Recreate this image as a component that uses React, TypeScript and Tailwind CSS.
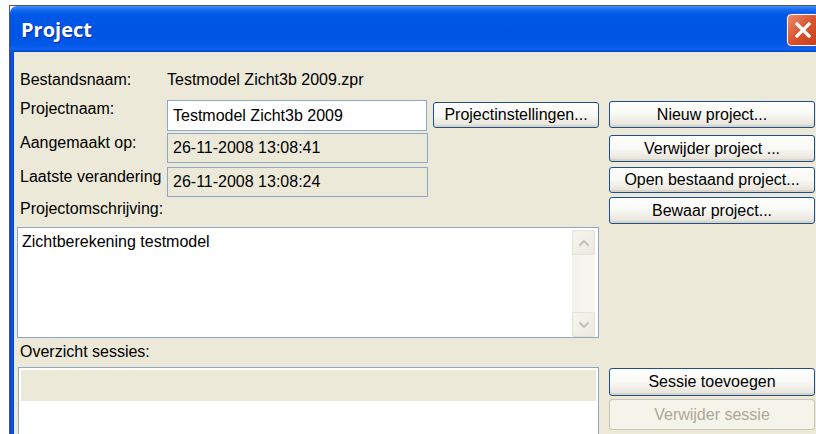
import React from "react";

type BtnProps = { label: string; className?: string; disabled?: boolean };

function XpButton({ label, className = "", disabled = false }: BtnProps) {
  const look = disabled
    ? "border-[#c9c7ba] bg-[#f5f4ea] text-[#aca899]"
    : "border-[#1f4f8a] bg-linear-to-b from-white via-[#f8f8f4] to-[#e4e1d6] text-black shadow-[inset_0_-2px_0_#d9d4c7]";
  return (
    <div
      className={`flex items-center justify-center rounded-[3px] border text-[16px] leading-[20px] whitespace-nowrap ${look} ${className}`}
    >
      {label}
    </div>
  );
}

function Chevron({ up }: { up: boolean }) {
  return (
    <svg width="12" height="8" viewBox="0 0 12 8">
      <path
        d={up ? "M1.5 6.5 L6 2 L10.5 6.5" : "M1.5 1.5 L6 6 L10.5 1.5"}
        fill="none"
        stroke="#c6c3b6"
        strokeWidth="2.2"
      />
    </svg>
  );
}

function ScrollArrow({ up }: { up: boolean }) {
  return (
    <div className="h-[25px] flex items-center justify-center rounded-[2px] border border-[#e4e2d8] bg-linear-to-br from-[#f6f5ef] to-[#ebe9e0]">
      <Chevron up={up} />
    </div>
  );
}

function CloseButton() {
  return (
    <div className="w-[32px] h-[32px] mt-[8px] mr-[10px] shrink-0 rounded-[4px] border border-white bg-linear-to-br from-[#ea8a6a] via-[#d9522d] to-[#c43e1a] flex items-center justify-center shadow-[0_0_0_1px_#2f58c4]">
      <svg width="18" height="18" viewBox="0 0 18 18">
        <path
          d="M3 3 L15 15 M15 3 L3 15"
          stroke="#ffffff"
          strokeWidth="3.2"
          strokeLinecap="square"
        />
      </svg>
    </div>
  );
}

const field = "border border-[#8fa9c4] flex items-center pl-[5px] whitespace-nowrap";

export default function App() {
  return (
    <div className="w-[816px] h-[434px] bg-white overflow-hidden font-['Liberation_Sans',Arial,sans-serif] text-[16px] leading-[20px] text-black">
      <div className="ml-[9px] mt-[5px] w-[820px] h-[429px] border-l border-t border-[#555555]">
        <div className="flex flex-col h-full rounded-tl-[7px] overflow-hidden">
          {/* title bar */}
          <div className="h-[46px] shrink-0 flex justify-between items-start bg-[linear-gradient(180deg,#3d8ff7_0%,#1467ee_9%,#0058e6_20%,#0054e3_62%,#0559e9_86%,#0b64f1_94%,#0045c8_100%)]">
            <div className="pl-[11px] pt-[14px] font-['Open_Sans','Liberation_Sans',sans-serif] font-bold text-[20px] leading-[20px] text-white [text-shadow:1px_1px_0_#0a2a9a]">
              Project
            </div>
            <CloseButton />
          </div>

          <div className="flex flex-1">
            {/* left window frame */}
            <div className="w-[4px] shrink-0 bg-[linear-gradient(90deg,#0a3cc9,#0a5ae8_50%,#0845d2)]" />

            {/* dialog body */}
            <div className="flex-1 bg-[#ece9d8] pl-[3px]">
              <div className="grid grid-cols-[150px_261px_5px_166px_10px_206px] grid-rows-[48px_33px_34px_30px_30px_111px_29px_67px]">
                {/* row 1 */}
                <div className="pl-[3px] mt-[18px]">Bestandsnaam:</div>
                <div className="col-span-3 mt-[18px]">Testmodel Zicht3b 2009.zpr</div>
                <div />
                <div />

                {/* row 2 */}
                <div className="pl-[3px] mt-[-1px]">Projectnaam:</div>
                <div className={`${field} h-[31px] bg-white mr-[1px]`}>Testmodel Zicht3b 2009</div>
                <div />
                <XpButton label="Projectinstellingen..." className="h-[26px] mt-[2px]" />
                <div />
                <XpButton label="Nieuw project..." className="h-[27px] mt-[1px]" />

                {/* row 3 */}
                <div className="pl-[3px] whitespace-nowrap">Aangemaakt op:</div>
                <div className={`${field} h-[30px]`}>26-11-2008 13:08:41</div>
                <div />
                <div />
                <div />
                <XpButton label="Verwijder project ..." className="h-[27px] mt-[2px]" />

                {/* row 4 */}
                <div className="pl-[3px] whitespace-nowrap">Laatste verandering</div>
                <div className={`${field} h-[30px]`}>26-11-2008 13:08:24</div>
                <div />
                <div />
                <div />
                <XpButton label="Open bestaand project..." className="h-[26px]" />

                {/* row 5 */}
                <div className="col-span-4 pl-[3px] mt-[2px]">Projectomschrijving:</div>
                <div />
                <XpButton label="Bewaar project..." className="h-[27px]" />

                {/* row 6: description */}
                <div className="col-span-4 border border-[#8fa9c4] bg-white flex">
                  <div className="flex-1 pl-[4px] pt-[4px]">Zichtberekening testmodel</div>
                  <div className="w-[23px] mr-[3px] mt-[2px] flex flex-col bg-linear-to-r from-[#f3f2ec] to-[#f8f7f3]">
                    <ScrollArrow up />
                    <div className="flex-1" />
                    <ScrollArrow up={false} />
                  </div>
                </div>
                <div />
                <div />

                {/* row 7 */}
                <div className="col-span-4 pl-[3px] mt-[4px]">Overzicht sessies:</div>
                <div />
                <div />

                {/* row 8: sessions */}
                <div className="col-span-4 ml-[1px] border border-[#8fa9c4] bg-white p-[2px] h-[80px]">
                  <div className="h-[31px] bg-[#ece9d8]" />
                </div>
                <div />
                <div className="flex flex-col">
                  <XpButton label="Sessie toevoegen" className="h-[28px] mt-[1px]" />
                  <XpButton label="Verwijder sessie" disabled className="h-[31px] mt-[3px]" />
                </div>
              </div>
            </div>
          </div>
        </div>
      </div>
    </div>
  );
}
